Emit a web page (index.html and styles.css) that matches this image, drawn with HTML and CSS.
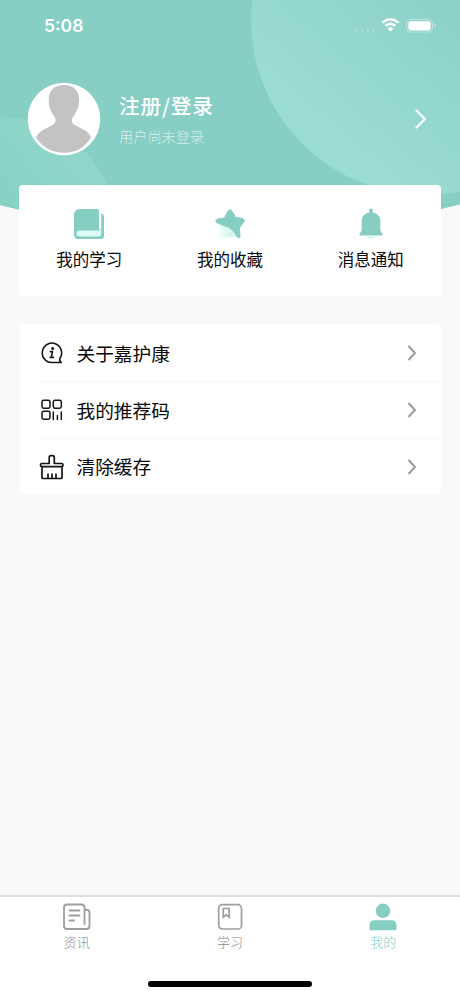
FILE: index.html
```html
<!DOCTYPE html>
<html lang="zh-CN">
<head>
<meta charset="utf-8">
<title>我的</title>
<link rel="stylesheet" href="styles.css">
</head>
<body>
<div class="screen">
  <header class="hero">
    <svg class="hero-bg" viewBox="0 0 460 240" aria-hidden="true">
      <defs>
        <clipPath id="curve"><path d="M0 0H460V204.500Q230 263 0 205Z"/></clipPath>
        <linearGradient id="big" x1="0.200" y1="0.800" x2="0.620" y2="0.300"><stop offset="0" stop-color="#9bdcd3"/><stop offset="1" stop-color="#87cec5"/></linearGradient>
        <linearGradient id="small" x1="0.850" y1="0.150" x2="0.500" y2="0.450"><stop offset="0" stop-color="#91d6cb"/><stop offset="1" stop-color="#86d0c4"/></linearGradient>
      </defs>
      <g clip-path="url(#curve)">
        <path fill="#87cec5" d="M0 0H460V240H0Z"/>
        <circle cx="426" cy="20" r="175" fill="url(#big)"/>
        <circle cx="4" cy="229" r="112" fill="url(#small)"/>
      </g>
    </svg>
    <div class="status">
      <span class="time">5:08</span>
      <svg class="status-icons" width="84" height="20" viewBox="0 0 84 20" aria-hidden="true">
        <path d="M4.500 12v5M10 12v5M16 12v5M21.500 12v5" stroke="#fff" stroke-opacity=".16" stroke-width="2"/>
        <g fill="none" stroke="#fff" stroke-width="2.500"><path d="M30.400 7.600Q38.500 .9 46.600 7.600"/><path d="M33.600 10.700Q38.500 6.800 43.400 10.700"/></g>
        <path d="M38.500 16.500L35.600 13.500Q38.500 11 41.400 13.500Z" fill="#fff"/>
        <rect x="54.500" y="4.500" width="26" height="12.500" rx="3.800" fill="none" stroke="#fff" stroke-opacity=".4"/>
        <rect x="56.300" y="6.200" width="22.500" height="9.200" rx="2.300" fill="#fff"/>
        <path d="M82.300 8.800q1.500.5 1.500 2t-1.500 2z" fill="#fff" fill-opacity=".5"/>
      </svg>
    </div>
    <div class="profile">
      <svg class="avatar" width="74" height="74" viewBox="0 0 74 74" aria-hidden="true">
        <circle cx="37" cy="37" r="36.300" fill="#fff"/>
        <path fill="#c3c3c3" d="M37 3C27 3 21.500 9 21.700 18C21.700 25 24 30 27 34C29.500 37.500 29 41 26 42.700L15 48.500Q11 51 9 55.500Q19 70.800 37 70.800Q55 70.800 64 55.500Q62.500 51.500 58.500 48.500L47.500 43C44.500 41 44 38 46 35C50 29.500 52 25 52.200 18C52.300 9 46.500 3 37 3Z"/>
      </svg>
      <div class="who"><div class="name">注册/登录</div><div class="sub">用户尚未登录</div></div>
      <svg class="go" width="12" height="20" viewBox="0 0 12 20" aria-hidden="true"><path d="M1.500 1.500L9.800 10L1.500 18.500" fill="none" stroke="#fff" stroke-width="2.200" stroke-linecap="round" stroke-linejoin="round"/></svg>
    </div>
  </header>

  <section class="shortcuts">
    <div class="shortcut">
      <svg width="34" height="34" viewBox="0 0 34 34" aria-hidden="true">
        <path fill="#86cdc2" d="M8 2H25.500Q27 2 27 3.500V23H7Q3.500 23 2 27V8.500Q2 2 8 2ZM29.300 6.500Q32 7 32 9V29Q32 32 29 32H7Q2 32 2 27H3Q4 30 7 30H26.500Q29.300 30 29.300 26Z"/>
        <path fill="#86cdc2" d="M2 22H30V32H7Q2 32 2 27Z"/>
        <path fill="#e0faf5" d="M8 23.500H27L29.300 22V26.500Q29 29.500 26.500 29.500H7.500Q4.500 29.500 4.500 26.700Q4.500 23.500 8 23.500Z"/>
      </svg>
      <span>我的学习</span>
    </div>
    <div class="shortcut">
      <svg width="34" height="34" viewBox="0 0 34 34" aria-hidden="true">
        <defs><linearGradient id="glow" x1="0" y1="0" x2="1" y2="0"><stop stop-color="#f0fffa"/><stop offset="1" stop-color="#c8f1e8"/></linearGradient></defs>
        <path fill="url(#glow)" d="M6 17L16 18L24 29L17 30.500L8 31.500Q5 31 5.500 28Z"/>
        <path fill="#86cdc2" stroke="#86cdc2" stroke-linejoin="round" d="M14.700 4.500Q17 1 19.300 4.500L22.500 10.300L30 11.700Q32.500 13 30.500 15.500L26.300 21L27 29.500Q26.500 31.500 24.500 30.500Q20 20 10.500 18.500L3.500 15.500Q2 13.500 4 12.200L11.500 10.800Z"/>
      </svg>
      <span>我的收藏</span>
    </div>
    <div class="shortcut">
      <svg width="34" height="34" viewBox="0 0 34 34" aria-hidden="true">
        <path fill="#d3f5ee" d="M13 29.500H21Q20.500 31.500 17 31.500T13 29.500Z"/>
        <circle cx="17" cy="3.300" r="1.900" fill="#86cdc2"/>
        <path fill="#86cdc2" d="M16 4H18V5.200Q26 6.500 26.300 14V22.500Q26.500 25 28.400 26.500V28.500H5.600V26.500Q7.500 25 7.700 22.500V14Q8 6.500 16 5.200Z"/>
      </svg>
      <span>消息通知</span>
    </div>
  </section>

  <nav class="menu">
    <div class="row">
      <svg class="lead" width="26" height="26" viewBox="0 0 26 26" fill="none" stroke="#151515" stroke-width="1.600" stroke-linecap="round" stroke-linejoin="round" aria-hidden="true"><path d="M22.200 22.500H13A9.700 9.700 0 1 1 20.800 18.500Q20 20.500 22.200 22.500Z"/><path d="M11.300 11.600H13.500L12.300 17.400H14.400M11.200 17.400H12.300" stroke-width="1.600"/><circle cx="13.700" cy="8.400" r=".7" fill="#151515"/></svg>
      <span>关于嘉护康</span>
      <svg class="chev" width="10" height="16" viewBox="0 0 10 16" aria-hidden="true"><path d="M1.500 1L8 8L1.500 15"/></svg>
    </div>
    <div class="row">
      <svg class="lead" width="26" height="26" viewBox="0 0 26 26" fill="none" stroke="#151515" stroke-width="1.500" stroke-linecap="round" aria-hidden="true"><rect x="3" y="3.200" width="8" height="8" rx="1.700"/><rect x="14.300" y="3.200" width="8" height="8" rx="1.700"/><rect x="3" y="14.300" width="8" height="8" rx="1.700"/><path d="M14.300 15V22.500M18.400 18.500V22.500M22.300 15V22.500"/></svg>
      <span>我的推荐码</span>
      <svg class="chev" width="10" height="16" viewBox="0 0 10 16" aria-hidden="true"><path d="M1.500 1L8 8L1.500 15"/></svg>
    </div>
    <div class="row">
      <svg class="lead" width="26" height="26" viewBox="0 0 26 26" fill="none" stroke="#151515" stroke-width="1.700" stroke-linecap="round" stroke-linejoin="round" aria-hidden="true"><path d="M10.200 9.500V3.500Q10.200 1.700 12 1.700H13.500Q15.300 1.700 15.300 3.500V9.500H22.500Q24 9.500 24 11V11.500Q24 12.700 22.500 12.700H3Q1.500 12.700 1.500 11.500V11Q1.500 9.500 3 9.500ZM3 13V23.500Q3 24.500 4 24.500H22Q23 24.500 23 23.500V13M9 20V24M13 20V24M17 20V24"/></svg>
      <span>清除缓存</span>
      <svg class="chev" width="10" height="16" viewBox="0 0 10 16" aria-hidden="true"><path d="M1.500 1L8 8L1.500 15"/></svg>
    </div>
  </nav>

  <footer class="tabs">
    <div class="tab">
      <svg width="30" height="30" viewBox="0 0 30 30" fill="none" stroke="#9e9e9e" stroke-width="1.800" stroke-linecap="round" aria-hidden="true"><path d="M22.500 22V5.500Q22.500 2.500 19.500 2.500H5Q2 2.500 2 5.500V24Q2 27 5 27H24.500Q27.500 27 27.500 24V10.500Q27.500 7.500 23 7.500M7.500 8.500H17.500M7.500 13.500H17.500M7.500 18.500H12"/></svg>
      <span>资讯</span>
    </div>
    <div class="tab">
      <svg width="30" height="30" viewBox="0 0 30 30" fill="none" stroke="#9e9e9e" stroke-width="1.700" aria-hidden="true"><rect x="3.700" y="2.700" width="22.800" height="24.300" rx="3.600"/><path d="M8.200 6.500H14.200V15.200L11.200 12.800L8.200 15.200Z"/></svg>
      <span>学习</span>
    </div>
    <div class="tab active">
      <svg width="30" height="30" viewBox="0 0 30 30" fill="#86cdc2" aria-hidden="true"><circle cx="15" cy="8.800" r="7.200"/><path d="M6.500 18.200H23.500Q28.500 18.200 28.500 23.500V27Q28.500 28.300 27 28.300H3Q1.500 28.300 1.500 27V23.500Q1.500 18.200 6.500 18.200Z"/></svg>
      <span>我的</span>
    </div>
  </footer>
  <div class="home"></div>
</div>
</body>
</html>
```
FILE: styles.css
```css
* { box-sizing: border-box; }
body { margin: 0; background: #f9f9f9; font-family: "Noto Sans CJK SC", sans-serif; color: #080808; }
svg { display: block; flex: none; }
.screen { width: 460px; height: 996px; display: flex; flex-direction: column; overflow: hidden; }
.hero { position: relative; height: 185px; flex: none; }
.hero-bg { position: absolute; left: 0; top: 0; width: 460px; height: 240px; }
.status { position: relative; height: 51px; padding: 0 24px 0 44px; display: flex; align-items: center; justify-content: space-between; }
.time { font: 600 17.500px/22px Inter, sans-serif; color: #fff; padding-top: 1px; }
.status-icons { margin-top: -1px; }
.profile { position: relative; display: flex; align-items: center; padding: 30.500px 33px 0 27px; }
.who { margin: -2px 0 0 18px; flex: 1; color: #fff; }
.name { font-size: 20.700px; font-weight: 500; line-height: 30px; letter-spacing: .8px; }
.sub { font-size: 14.200px; font-weight: 300; line-height: 20px; margin-top: 6px; opacity: .65; }
.go { margin-top: 1px; }
.shortcuts { position: relative; flex: none; height: 111px; margin: 0 19px; padding: 22px 0 0; background: #fff; border-radius: 4px; display: grid; grid-template-columns: repeat(3, 1fr); }
.shortcut { display: flex; flex-direction: column; align-items: center; font-size: 16.500px; line-height: 24px; gap: 6px; }
.menu { flex: none; margin: 28px 19px 0 20px; background: #fff; border-radius: 4px; }
.row { display: flex; align-items: center; height: 56.800px; padding: 2px 24px 0 19px; font-size: 18.700px; line-height: 28px; position: relative; }
.row + .row::before { content: ""; position: absolute; left: 16px; right: 0; top: 0; height: 1px; background: #f6f6f6; }
.lead { margin-right: 11.500px; }
.row span { flex: 1; margin-top: -1px; }
.chev path { fill: none; stroke: #999; stroke-width: 1.900; }
.tabs { margin-top: auto; flex: none; height: 101px; background: #fff; border-top: 2px solid #dfdfdf; display: grid; grid-template-columns: repeat(3, 1fr); }
.tab { display: flex; flex-direction: column; align-items: center; padding-top: 5px; font-size: 13px; font-weight: 300; line-height: 20px; color: #8c8c8c; }
.active { color: #86cdc2; }
.home { position: absolute; left: 148px; top: 981px; width: 164px; height: 6px; border-radius: 3px; background: #000; }
```
